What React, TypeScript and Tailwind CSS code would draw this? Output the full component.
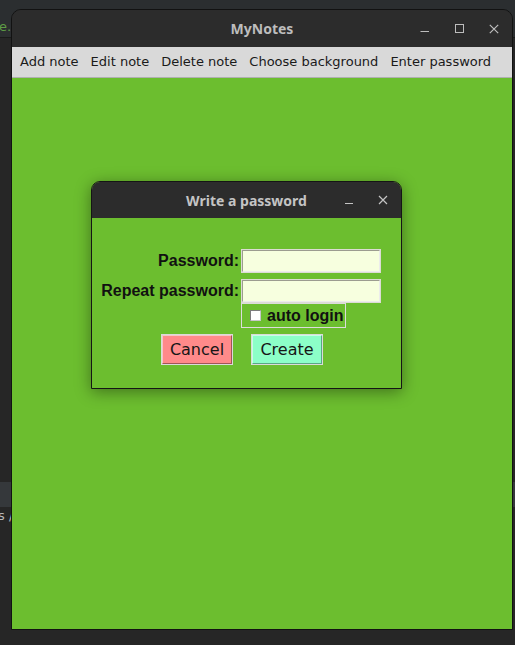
import React from "react";

const dv = { fontFamily: '"DejaVu Sans", sans-serif' };
const lb = { fontFamily: '"Liberation Sans", Arial, sans-serif' };
const ns = { fontFamily: '"Noto Sans", "DejaVu Sans", sans-serif' };

function Entry() {
  return (
    <div className="h-[24px] w-[140px] border border-[#dcdcd4] bg-[#dcdcd4]">
      <div className="h-full w-full border-t border-l border-[#9c9c90] border-r-[#ececec] border-b-[#ececec] border-r border-b bg-[#f7ffdf]" />
    </div>
  );
}

function Btn({ label, bg, dark }: { label: string; bg: string; dark: string }) {
  return (
    <div className="h-[31px] w-[72px] border border-[#dadada]">
      <div
        className={`flex h-full w-full items-center justify-center border text-[16px] text-[#161616] ${bg} ${dark}`}
        style={dv}
      >
        {label}
      </div>
    </div>
  );
}

export default function App() {
  return (
    <div className="relative h-[645px] w-[515px] overflow-hidden bg-[#262626]">
      {/* desktop background bands */}
      <div className="flex h-full flex-col">
        <div className="flex h-[37px] items-end bg-[#2b2e30] pb-[3px] text-[13px] leading-[15px] text-[#5e9c45]" style={dv}>
          <span className="-ml-[1px]">e.</span>
        </div>
        <div className="h-px bg-[#1a1a1a]" />
        <div className="h-[444px] bg-[#262626]" />
        <div className="h-[25px] bg-[#35383b]" />
        <div className="flex h-[18px] items-center text-[13px] text-[#b8b8b8]" style={dv}>
          <span className="-ml-[2px]">s /</span>
        </div>
        <div className="flex-1 bg-[#262626]" />
      </div>

      {/* main window */}
      <div className="absolute left-[11px] top-[9px] flex h-[621px] w-[502px] flex-col overflow-hidden rounded-t-[10px] border border-[#121212] bg-[#2c2c2c]">
        <div className="grid h-[37px] grid-cols-[1fr_auto_1fr] items-center bg-[#2c2c2c]">
          <div />
          <div className="text-[14px] font-bold text-[#bdbdbd]" style={ns}>
            MyNotes
          </div>
          <div className="flex items-center justify-end pr-[13px]">
            <svg width="10" height="10" viewBox="0 0 10 10" className="mr-[25px]">
              <line x1="0.5" y1="7.5" x2="9" y2="7.5" stroke="#bdbdbd" strokeWidth="1" />
            </svg>
            <svg width="10" height="10" viewBox="0 0 10 10" className="mr-[24px]">
              <rect x="0.5" y="0.5" width="8" height="8" fill="none" stroke="#bdbdbd" strokeWidth="1" />
            </svg>
            <svg width="10" height="10" viewBox="0 0 10 10">
              <path d="M0.8 0.8 L9.2 9.2 M9.2 0.8 L0.8 9.2" stroke="#bdbdbd" strokeWidth="1.2" />
            </svg>
          </div>
        </div>
        <div
          className="flex h-[31px] items-center gap-[12px] border-b border-[#b0b0b0] bg-[#d9d9d9] pl-[8px] text-[13px] text-[#1a1a1a]"
          style={dv}
        >
          <span>Add note</span>
          <span>Edit note</span>
          <span>Delete note</span>
          <span>Choose background</span>
          <span>Enter password</span>
        </div>
        <div className="flex-1 bg-[#6cbe2f]" />
      </div>

      {/* dialog */}
      <div className="absolute left-[91px] top-[181px] flex h-[208px] w-[311px] flex-col overflow-hidden rounded-t-[9px] border border-[#151515] shadow-[0_3px_16px_rgba(0,0,0,0.4)]">
        <div className="grid h-[36px] grid-cols-[1fr_auto_1fr] items-center bg-[#2c2c2c]">
          <div />
          <div className="text-[14px] font-bold text-[#c4c4c4]" style={ns}>
            Write a password
          </div>
          <div className="flex items-center justify-end pr-[13px]">
            <svg width="10" height="10" viewBox="0 0 10 10" className="mr-[24px] mt-[2px]">
              <line x1="1" y1="7.5" x2="9" y2="7.5" stroke="#c4c4c4" strokeWidth="1" />
            </svg>
            <svg width="10" height="10" viewBox="0 0 10 10">
              <path d="M1 1 L9 9 M9 1 L1 9" stroke="#c4c4c4" strokeWidth="1.2" />
            </svg>
          </div>
        </div>
        <div className="flex flex-1 flex-col bg-[#6cbe2f] pt-[31px]" style={lb}>
          <div className="flex items-center">
            <div className="w-[149px] pr-[2px] text-right text-[16px] font-bold text-[#111]">Password:</div>
            <Entry />
          </div>
          <div className="mt-[6px] flex items-center">
            <div className="w-[149px] pr-[2px] text-right text-[16px] font-bold text-[#111]">Repeat password:</div>
            <Entry />
          </div>
          <div className="flex">
            <div className="w-[149px]" />
            <div className="flex h-[25px] items-center border border-[#dcdcdc] pl-[8px] pr-[2px]">
              <div className="h-[11px] w-[11px] border border-[#7c7c7c] border-b-[#c8c8c8] border-r-[#c8c8c8] bg-white" />
              <span className="ml-[6px] text-[16px] font-bold text-[#111]">auto login</span>
            </div>
          </div>
          <div className="mt-[6px] flex gap-[18px] pl-[69px]">
            <Btn label="Cancel" bg="bg-[#ff8a8a]" dark="border-[#f4c8c8] border-b-[#a05656] border-r-[#a05656]" />
            <Btn label="Create" bg="bg-[#8cffc8]" dark="border-[#c8ffe6] border-b-[#5aa882] border-r-[#5aa882]" />
          </div>
        </div>
      </div>
    </div>
  );
}
